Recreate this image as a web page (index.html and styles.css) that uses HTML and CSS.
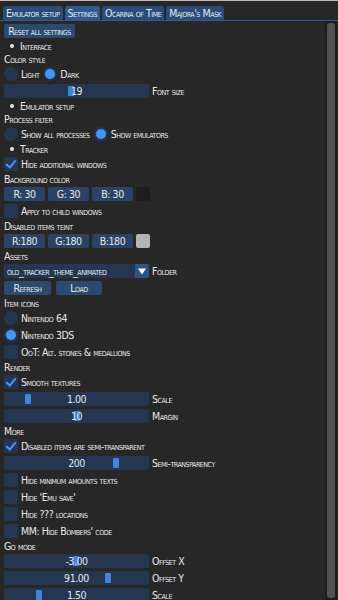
FILE: index.html
```html
<!DOCTYPE html>
<html lang="en">
<head>
    <meta charset="UTF-8">
    <meta name="viewport" content="width=device-width, initial-scale=1.0">
    <title>Tracker settings</title>
    <link rel="stylesheet" href="styles.css">
</head>
<body>

<div class="window">
    <!-- Tab bar -->
    <div class="tabbar">
        <div class="tab">Emulator setup</div>
        <div class="tab active">Settings</div>
        <div class="tab">Ocarina of Time</div>
        <div class="tab">Majora's Mask</div>
    </div>

    <div class="body">
        <div class="content">
            <div class="row"><button class="btn reset">Reset all settings</button></div>

            <div class="text bullet">Interface</div>
            <div class="text">Color style</div>
            <div class="row">
                <span class="radio"></span><span class="label">Light</span>
                <span class="radio on"></span><span class="label">Dark</span>
            </div>
            <div class="row">
                <div class="slider"><span class="grab" style="left: 64px"></span><span class="value">19</span></div>
                <span class="label">Font size</span>
            </div>

            <div class="text bullet">Emulator setup</div>
            <div class="text">Process filter</div>
            <div class="row">
                <span class="radio"></span><span class="label">Show all processes</span>
                <span class="radio on"></span><span class="label">Show emulators</span>
            </div>

            <div class="text bullet">Tracker</div>
            <div class="row"><span class="check on"></span><span class="label">Hide additional windows</span></div>
            <div class="text">Background color</div>
            <div class="row">
                <div class="fields">
                    <span class="field">R: 30</span>
                    <span class="field">G: 30</span>
                    <span class="field">B: 30</span>
                    <span class="swatch dark"></span>
                </div>
            </div>
            <div class="row"><span class="check"></span><span class="label">Apply to child windows</span></div>
            <div class="text">Disabled items teint</div>
            <div class="row">
                <div class="fields">
                    <span class="field">R:180</span>
                    <span class="field">G:180</span>
                    <span class="field">B:180</span>
                    <span class="swatch light"></span>
                </div>
            </div>
            <div class="text">Assets</div>
            <div class="row">
                <div class="combo">
                    <span class="combo-text">old_tracker_theme_animated</span>
                    <span class="combo-arrow"><svg width="8" height="7" viewBox="0 0 8 7"><path d="M0 0.5 L8 0.5 L4 6.5 Z" fill="#fff"/></svg></span>
                </div>
                <span class="label">Folder</span>
            </div>
            <div class="row">
                <button class="btn refresh">Refresh</button>
                <button class="btn load">Load</button>
            </div>

            <div class="text">Item icons</div>
            <div class="row"><span class="radio"></span><span class="label">Nintendo 64</span></div>
            <div class="row"><span class="radio on"></span><span class="label">Nintendo 3DS</span></div>
            <div class="row"><span class="check"></span><span class="label">OoT: Alt. stones &amp; medallions</span></div>

            <div class="text">Render</div>
            <div class="row"><span class="check on"></span><span class="label">Smooth textures</span></div>
            <div class="row">
                <div class="slider"><span class="grab" style="left: 21px"></span><span class="value">1.00</span></div>
                <span class="label">Scale</span>
            </div>
            <div class="row">
                <div class="slider"><span class="grab" style="left: 70px"></span><span class="value">10</span></div>
                <span class="label">Margin</span>
            </div>

            <div class="text">More</div>
            <div class="row"><span class="check on"></span><span class="label">Disabled items are semi-transparent</span></div>
            <div class="row">
                <div class="slider"><span class="grab" style="left: 109px"></span><span class="value">200</span></div>
                <span class="label">Semi-transparency</span>
            </div>
            <div class="row"><span class="check"></span><span class="label">Hide minimum amounts texts</span></div>
            <div class="row"><span class="check"></span><span class="label">Hide 'Emu save'</span></div>
            <div class="row"><span class="check"></span><span class="label">Hide ??? locations</span></div>
            <div class="row"><span class="check"></span><span class="label">MM: Hide Bombers' code</span></div>

            <div class="text">Go mode</div>
            <div class="row">
                <div class="slider"><span class="grab" style="left: 69px"></span><span class="value">-3.00</span></div>
                <span class="label">Offset X</span>
            </div>
            <div class="row">
                <div class="slider"><span class="grab" style="left: 101px"></span><span class="value">91.00</span></div>
                <span class="label">Offset Y</span>
            </div>
            <div class="row">
                <div class="slider"><span class="grab" style="left: 32px"></span><span class="value">1.50</span></div>
                <span class="label">Scale</span>
            </div>
        </div>

        <div class="scrollbar"><div class="scroll-grab"></div></div>
    </div>
</div>

</body>
</html>
```

FILE: styles.css
```css
body {
    margin: 0;
    padding: 0;
    background-color: #272727;
    font-family: "DejaVu Sans", "Liberation Sans", sans-serif;
    font-stretch: condensed;
    font-variant: small-caps;
    font-size: 10.5px;
    letter-spacing: -0.45px;
    color: #e8e8e8;
    overflow: hidden;
}
.window {
    width: 338px;
    height: 600px;
    border-top: 1px solid #b9b9b9;
    box-sizing: border-box;
    display: flex;
    flex-direction: column;
}
.tabbar {
    display: flex;
    gap: 2px;
    padding: 5px 3px 0 3px;
    border-bottom: 1px solid #2f5a94;
}
.tab {
    height: 14px;
    line-height: 14px;
    padding: 0 3px;
    background: #2b4c78;
    border-radius: 3px 3px 0 0;
    white-space: nowrap;
}
.tab.active {
    background: #30588e;
}
.body {
    flex: 1;
    display: flex;
    min-height: 0;
}
.content {
    flex: 1;
    display: flex;
    flex-direction: column;
    gap: 3px;
    padding: 3px 0 0 4px;
    overflow: hidden;
}
.text {
    height: 10px;
    line-height: 10px;
    white-space: nowrap;
}
.bullet {
    padding-left: 16px;
    position: relative;
}
.bullet::before {
    content: "";
    position: absolute;
    left: 6px;
    top: 3px;
    width: 4px;
    height: 4px;
    border-radius: 50%;
    background: #e8e8e8;
}
.row {
    height: 14px;
    display: flex;
    align-items: center;
    flex-shrink: 0;
}
.label {
    margin-left: 3px;
    margin-right: 4px;
    white-space: nowrap;
    line-height: 14px;
}
.btn {
    font: inherit;
    color: inherit;
    letter-spacing: inherit;
    height: 14px;
    line-height: 14px;
    padding: 0 3px;
    border: none;
    border-radius: 2px;
    background: #2c4a70;
    white-space: nowrap;
}
.btn.reset {
    width: 71px;
    padding: 0;
}
.btn.refresh {
    width: 47px;
}
.btn.load {
    width: 46px;
    margin-left: 5px;
}
.radio {
    width: 14px;
    height: 14px;
    border-radius: 50%;
    background: #253750;
    flex-shrink: 0;
    position: relative;
}
.radio.on::after {
    content: "";
    position: absolute;
    left: 2px;
    top: 2px;
    width: 10px;
    height: 10px;
    border-radius: 50%;
    background: #4296fa;
}
.check {
    width: 14px;
    height: 14px;
    border-radius: 2px;
    background: #253750;
    flex-shrink: 0;
    position: relative;
}
.check.on::after {
    content: "";
    position: absolute;
    left: 4px;
    top: 1px;
    width: 4px;
    height: 8px;
    border-right: 2px solid #4296fa;
    border-bottom: 2px solid #4296fa;
    transform: rotate(40deg);
}
.slider {
    position: relative;
    width: 145px;
    height: 14px;
    border-radius: 2px;
    background: #253750;
    text-align: center;
    line-height: 14px;
    flex-shrink: 0;
}
.slider .grab {
    position: absolute;
    top: 2px;
    width: 6px;
    height: 10px;
    border-radius: 1px;
    background: #3d85e0;
}
.slider .value {
    position: relative;
}
.fields {
    display: flex;
    gap: 3px;
}
.field {
    width: 41px;
    height: 14px;
    line-height: 14px;
    text-align: center;
    border-radius: 2px;
    background: #2a4467;
}
.swatch {
    width: 14px;
    height: 14px;
    border-radius: 2px;
}
.swatch.dark {
    background: #1e1e1e;
}
.swatch.light {
    background: #b4b4b4;
}
.combo {
    width: 145px;
    height: 14px;
    display: flex;
    border-radius: 2px;
    background: #253750;
    flex-shrink: 0;
    overflow: hidden;
}
.combo-text {
    flex: 1;
    padding-left: 3px;
    line-height: 14px;
}
.combo-arrow {
    width: 14px;
    height: 14px;
    background: #2f5384;
    display: flex;
    align-items: center;
    justify-content: center;
}
.scrollbar {
    width: 12px;
    margin-right: 1px;
    background: #1d1d1d;
    padding: 2px 2px;
    box-sizing: border-box;
}
.scroll-grab {
    height: 100%;
    border-radius: 3px;
    background: #515151;
}
```
